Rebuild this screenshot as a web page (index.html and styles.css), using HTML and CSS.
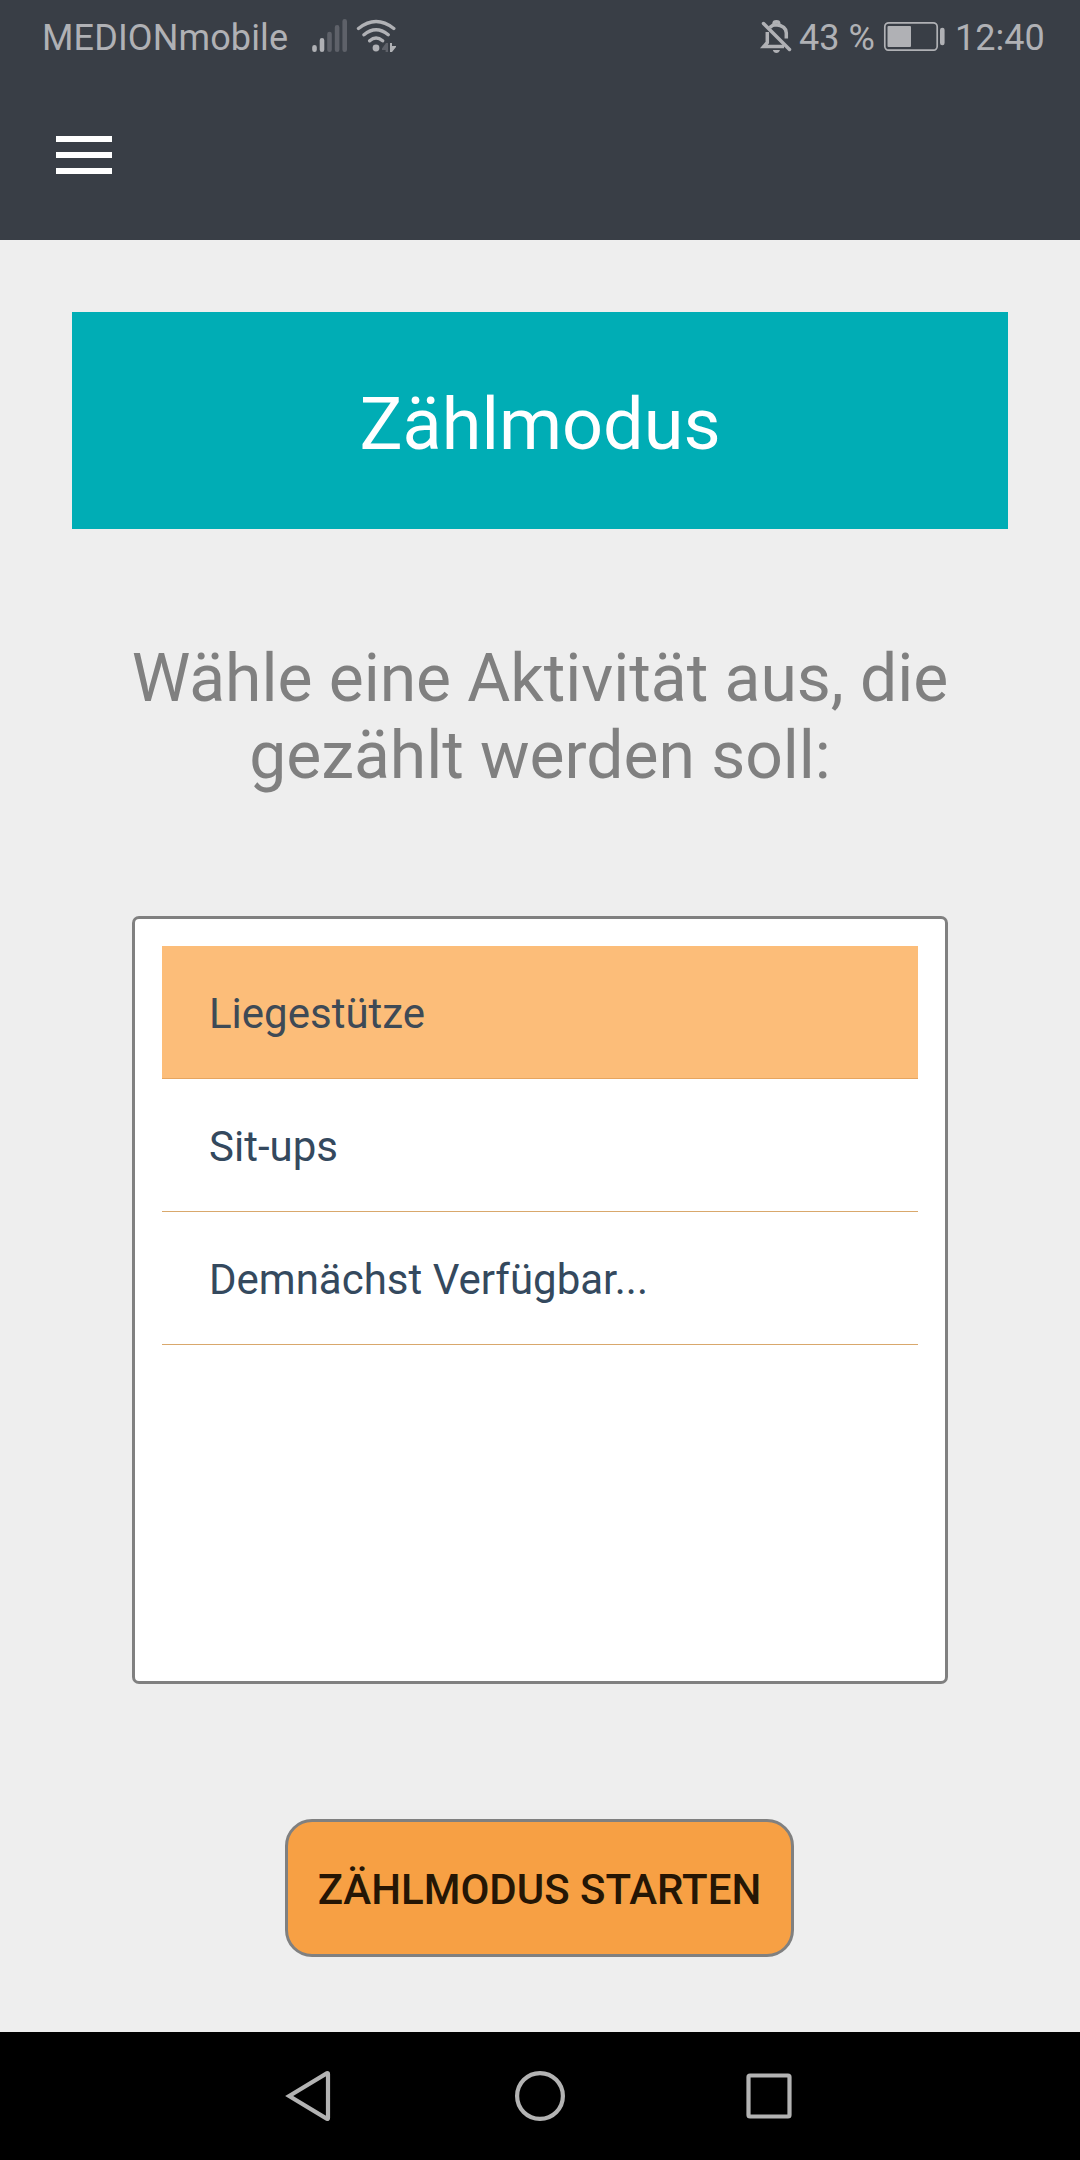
FILE: index.html
```html
<!DOCTYPE html>
<html lang="de">
<head>
<meta charset="utf-8">
<title>Zählmodus</title>
<link rel="stylesheet" href="styles.css">
</head>
<body>
<header class="header">
  <div class="status">
    <span class="carrier">MEDIONmobile</span>
    <svg class="signals" width="88" height="40" viewBox="310 16 88 40">
      <g stroke="#b0b1b5" stroke-width="4.6" stroke-linecap="round">
        <path d="M314.5 47.3V49.8M322 40.3V49.8"/>
        <path stroke="#5e6169" d="M329.5 34V49.8M337.1 27.2V49.8M344.7 21.3V49.8"/>
      </g>
      <g fill="none" stroke="#b0b1b5" stroke-width="3.4" stroke-linecap="round">
        <path d="M358.5 28.5Q376 14.6 393.8 28.5M364 34.8Q376 24.9 388.2 34.8M369.7 40.8Q376 35.4 382.6 40.8"/>
      </g>
      <circle cx="376" cy="48" r="3.4" fill="#b0b1b5"/>
      <path fill="#5e6169" d="M388 43V52H385.6V50H382V48.5L386 43Z"/>
      <path fill="#b0b1b5" d="M390 43H392V46H396V47L392 52H390Z"/>
    </svg>
    <svg class="bell" width="32" height="36" viewBox="760 18 32 36" fill="none" stroke="#b0b1b5" stroke-width="3.5">
      <path d="M767.3 32V42.5L763.8 46.5H784M769.8 27.4Q772.5 24.8 776 24.8Q786 25.5 786.3 33V38.5"/>
      <path d="M773.8 25V23.5Q773.8 21.6 776.4 21.6Q779 21.6 779 23.5V26" stroke-width="3"/>
      <path d="M763.5 23.5L789.5 49.5" stroke-linecap="round"/>
      <path d="M772.8 50H780Q779 53 776.4 53T772.8 50Z" fill="#b0b1b5" stroke="none"/>
    </svg>
    <span class="percent">43 %</span>
    <svg class="battery" width="62" height="30" viewBox="883 21 62 30">
      <rect x="884.8" y="22.8" width="52.4" height="27.4" rx="4" fill="none" stroke="#b0b1b5" stroke-width="1.7"/>
      <rect x="887.5" y="26" width="23.5" height="21" rx="1" fill="#b0b1b5"/>
      <rect x="940" y="27.7" width="4.6" height="17.6" rx="2.2" fill="#b0b1b5"/>
    </svg>
    <span class="clock">12:40</span>
  </div>
  <button class="menu" aria-label="Menü"><i></i><i></i><i></i></button>
</header>
<main class="content">
  <h1 class="title">Zählmodus</h1>
  <p class="prompt">Wähle eine Aktivität aus, die<br>gezählt werden soll:</p>
  <ul class="list">
    <li class="item selected">Liegestütze</li>
    <li class="item">Sit-ups</li>
    <li class="item">Demnächst Verfügbar...</li>
  </ul>
  <button class="start">ZÄHLMODUS STARTEN</button>
</main>
<nav class="nav">
  <svg width="50" height="54" viewBox="284 2069 50 54"><path d="M289.2 2096L327 2073.2Q328 2072.8 328 2074V2118Q328 2119.2 327 2118.8Z"/></svg>
  <svg width="54" height="54" viewBox="513 2069 54 54"><circle cx="541" cy="2096" r="22.9"/></svg>
  <svg width="50" height="54" viewBox="744 2069 50 54"><rect x="748.5" y="2075.5" width="41" height="41" rx="1.5"/></svg>
</nav>
</body>
</html>
```
FILE: styles.css
```css
* { box-sizing: border-box; }
body {
  margin: 0;
  width: 1080px;
  height: 2160px;
  display: flex;
  flex-direction: column;
  background: #eeeeee;
  font-family: Roboto, "Liberation Sans", sans-serif;
}
h1, p, ul { margin: 0; padding: 0; font-weight: 400; }
button { border: 0; padding: 0; font-family: inherit; }
svg { display: block; flex: none; }

.header { height: 240px; background: #393e46; }
.status {
  height: 72px;
  padding: 16px 0 0 42px;
  display: flex;
  align-items: flex-start;
  color: #b0b1b5;
  font-size: 36px;
  line-height: 44px;
  white-space: nowrap;
}
.carrier { width: 268px; letter-spacing: 0.12px; }
.bell { margin: 2px 7px 0 362px; }
.percent { width: 84px; }
.battery { margin-top: 5px; }
.clock { margin-left: 10px; }
.menu {
  margin: 64px 0 0 56px;
  width: 56px;
  display: flex;
  flex-direction: column;
  gap: 10px;
  background: none;
}
.menu i { height: 6px; background: #ffffff; }

.content {
  flex: 1;
  padding: 72px 72px 0;
  display: flex;
  flex-direction: column;
  align-items: center;
}
.title {
  width: 936px;
  height: 217px;
  padding-top: 68px;
  background: #00adb5;
  color: #ffffff;
  font-size: 72px;
  line-height: 90px;
  text-align: center;
}
.prompt {
  margin-top: 111px;
  color: #808080;
  font-size: 66px;
  line-height: 77px;
  letter-spacing: -0.04px;
  text-align: center;
  white-space: nowrap;
}
.list {
  margin-top: 122px;
  width: 816px;
  height: 768px;
  padding: 27px;
  list-style: none;
  background: #ffffff;
  border: 3px solid #808080;
  border-radius: 7px;
}
.item {
  height: 133px;
  padding: 3px 0 0 47px;
  border-bottom: 1px solid #d9a86c;
  color: #34495e;
  font-size: 42px;
  line-height: 130px;
}
.selected {
  background: #fcbd79;
  border-bottom-color: #e6a560;
  color: #3e4a56;
}
.start {
  margin: 135px 0 0 -1px;
  width: 509px;
  height: 138px;
  padding-top: 3px;
  background: #f7a044;
  border: 3px solid #808080;
  border-radius: 27px;
  color: #251605;
  font-size: 42px;
  font-weight: 500;
  white-space: nowrap;
}
.nav {
  height: 128px;
  padding: 0 286px 0 284px;
  display: flex;
  align-items: center;
  justify-content: space-between;
  background: #000000;
  fill: none;
  stroke: #b3b3b3;
  stroke-width: 4.2;
}
.nav svg { overflow: visible; }
```
